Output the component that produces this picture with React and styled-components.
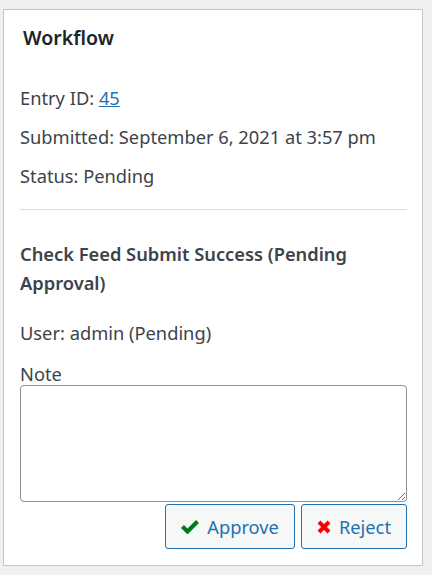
import React from "react";
import styled, { createGlobalStyle } from "styled-components";

const Global = createGlobalStyle`
  html, body { margin: 0; padding: 0; background: #f0f0f1; }
  body { font-family: "Noto Sans", "Open Sans", sans-serif; color: #3c434a; }
  * { box-sizing: border-box; }
`;

const Page = styled.div`
  padding: 9px 9px 9px 3px;
`;

const Box = styled.div`
  width: 420px;
  background: #fff;
  border: 1px solid #c3c4c7;
  padding: 0 15px 16px 16px;
`;

const Title = styled.h2`
  margin: 0;
  padding: 16px 3px 0;
  height: 68px;
  font-size: 19.5px;
  font-weight: 600;
  color: #1d2327;
  line-height: 24px;
`;

const Line = styled.p`
  margin: 0;
  font-size: 18.3px;
  line-height: 39px;
`;

const Link = styled.a`
  color: #2271b1;
  text-decoration: underline;
`;

const Divider = styled.hr`
  border: 0;
  border-top: 1px solid #dcdcde;
  margin: 14px 0 29px;
`;

const StepTitle = styled.h3`
  margin: 0 0 16px;
  font-size: 18.3px;
  font-weight: 600;
  line-height: 29px;
`;

const Label = styled.label`
  display: block;
  font-size: 18.3px;
  line-height: 22px;
  margin-top: 11px;
`;

const Note = styled.textarea`
  display: block;
  width: 387px;
  height: 117px;
  border: 1px solid #8c8f94;
  border-radius: 4px;
  resize: vertical;
  font: inherit;
`;

const Actions = styled.div`
  display: flex;
  justify-content: flex-end;
  gap: 6px;
  margin-top: 2px;
`;

const Button = styled.button`
  display: inline-flex;
  align-items: center;
  gap: 8px;
  height: 45px;
  padding: 0 ${(p) => p.$pad}px;
  border: 1px solid #2271b1;
  border-radius: 3px;
  background: #f6f7f7;
  color: #2271b1;
  font-family: inherit;
  font-size: 18.3px;
`;

const Check = () => (
  <svg width="18" height="15" viewBox="0 0 18 15">
    <path d="M1.5 7.5 L6.5 12.5 L16.5 2.5" stroke="#007a1a" strokeWidth="4.2" fill="none" strokeLinejoin="miter" />
  </svg>
);

const Cross = () => (
  <svg width="14" height="14" viewBox="0 0 14 14">
    <path d="M2 2 L12 12 M12 2 L2 12" stroke="#f00" strokeWidth="4" fill="none" />
  </svg>
);

export default function App() {
  return (
    <>
      <Global />
      <Page>
        <Box>
          <Title>Workflow</Title>
          <Line>
            Entry ID: <Link href="#">45</Link>
          </Line>
          <Line>Submitted: September 6, 2021 at 3:57 pm</Line>
          <Line>Status: Pending</Line>
          <Divider />
          <StepTitle>Check Feed Submit Success (Pending Approval)</StepTitle>
          <Line>User: admin (Pending)</Line>
          <Label htmlFor="note">Note</Label>
          <Note id="note" />
          <Actions>
            <Button $pad={15}>
              <Check />
              Approve
            </Button>
            <Button $pad={15}>
              <Cross />
              Reject
            </Button>
          </Actions>
        </Box>
      </Page>
    </>
  );
}
